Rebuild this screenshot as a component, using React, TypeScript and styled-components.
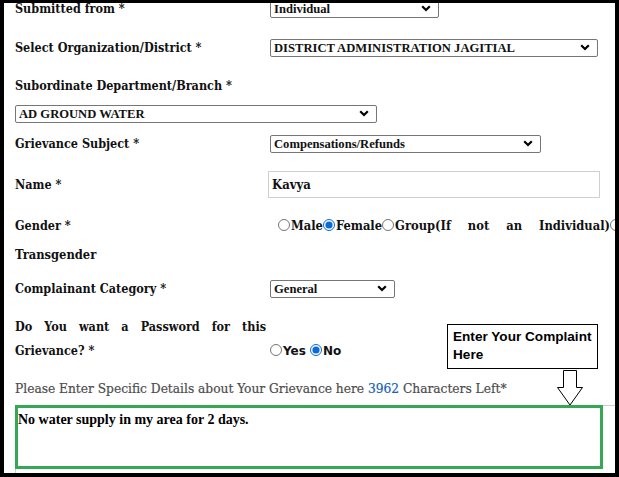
import React from "react";
import styled, { createGlobalStyle } from "styled-components";

const GlobalStyle = createGlobalStyle`
  html, body {
    margin: 0;
    padding: 0;
    background: #ffffff;
  }
  * {
    box-sizing: border-box;
  }
`;

const labelFont = `"DejaVu Serif Condensed", "DejaVu Serif", serif`;
const fieldFont = `"Liberation Serif", "Times New Roman", serif`;

const Frame = styled.div`
  position: relative;
  width: 619px;
  height: 477px;
  border-style: solid;
  border-color: #000;
  border-width: 3px 4px 4px 4px;
  overflow: hidden;
  background: #fff;
`;

const Form = styled.div`
  margin-top: -14px;
  padding-left: 11px;
`;

const Row = styled.div<{ h: number }>`
  display: flex;
  align-items: center;
  height: ${({ h }) => h}px;
`;

const Label = styled.div<{ w?: number }>`
  flex: none;
  width: ${({ w }) => w ?? 255}px;
  font-family: ${labelFont};
  font-weight: bold;
  font-size: 12.5px;
  color: #111;
  white-space: nowrap;
`;

const SelectWrap = styled.div<{ w: number }>`
  position: relative;
  width: ${({ w }) => w}px;
  height: 18px;
`;

const Select = styled.select`
  appearance: none;
  width: 100%;
  height: 100%;
  margin: 0;
  padding: 0 20px 0 3px;
  border: 1px solid #767676;
  border-radius: 2px;
  background: #fff;
  font-family: ${fieldFont};
  font-weight: bold;
  font-size: 12.6px;
  color: #111;
  outline: none;
`;

const Chevron = styled.svg`
  position: absolute;
  right: 8px;
  top: 6px;
  pointer-events: none;
`;

const TextInput = styled.input`
  width: 332px;
  height: 27px;
  margin: 0 0 0 -1px;
  padding: 0 3px;
  border: 1px solid #cfcfcf;
  font-family: ${labelFont};
  font-weight: bold;
  font-size: 13px;
  color: #111;
  outline: none;
`;

const GenderBlock = styled.div`
  padding-top: 7px;
  font-family: ${labelFont};
  font-weight: bold;
  font-size: 12.8px;
  color: #111;
  line-height: 29px;
`;

const GenderLine = styled.div`
  display: flex;
  align-items: center;
  height: 29px;
`;

const GenderOptions = styled.div`
  flex: none;
  width: 345px;
  margin-left: 8px;
  display: flex;
  justify-content: space-between;
  align-items: center;
`;

const Radio = styled.input.attrs({ type: "radio" })`
  width: 12px;
  height: 12px;
  margin: 0 1px 0 0;
  vertical-align: -1px;
  accent-color: #0a6ad8;
`;

const PasswordRow = styled.div`
  display: flex;
  align-items: flex-end;
  padding-top: 8px;
  height: 56px;
`;

const PasswordLabel = styled.div`
  width: 251px;
  margin-right: 4px;
  font-family: ${labelFont};
  font-weight: bold;
  font-size: 12.5px;
  line-height: 24px;
  color: #111;
  text-align: justify;
`;

const YesNo = styled.div`
  display: flex;
  align-items: center;
  height: 24px;
  gap: 4px;
  font-family: "DejaVu Sans", Verdana, sans-serif;
  font-weight: bold;
  font-size: 12px;
  color: #111;
`;

const Details = styled.div`
  margin-top: 13px;
  height: 24px;
  line-height: 24px;
  font-family: ${labelFont};
  font-size: 13.6px;
  color: #4d4d4d;
  white-space: nowrap;
  -webkit-text-stroke: 0.2px #4d4d4d;
`;

const Count = styled.span`
  color: #1a5fb4;
  -webkit-text-stroke: 0.2px #1a5fb4;
`;

const ComplaintBox = styled.textarea`
  display: block;
  margin-top: 5px;
  width: 640px;
  height: 100px;
  padding: 6px 2px;
  border: 1px solid #cccccc;
  resize: none;
  font-family: ${fieldFont};
  font-weight: bold;
  font-size: 14px;
  color: #000;
  outline: none;
`;

const GreenMark = styled.div`
  position: absolute;
  left: 11px;
  top: 402px;
  width: 588px;
  height: 64px;
  border: 3px solid #34a853;
  pointer-events: none;
`;

const Callout = styled.div`
  position: absolute;
  left: 443px;
  top: 321px;
  width: 151px;
  height: 45px;
  padding: 3px 5px;
  border: 1px solid #000;
  background: #fff;
  font-family: "Liberation Sans", Arial, sans-serif;
  font-weight: bold;
  font-size: 13.6px;
  line-height: 18px;
  color: #000;
  white-space: nowrap;
`;

const ArrowMark = styled.svg`
  position: absolute;
  left: 552px;
  top: 367px;
`;

function Dropdown({ w, value }: { w: number; value: string }) {
  return (
    <SelectWrap w={w}>
      <Select defaultValue={value}>
        <option>{value}</option>
      </Select>
      <Chevron width="10" height="7" viewBox="0 0 10 7">
        <path d="M1.2 1.2 L5 5 L8.8 1.2" fill="none" stroke="#000" strokeWidth="2.2" />
      </Chevron>
    </SelectWrap>
  );
}

export default function App() {
  return (
    <>
      <GlobalStyle />
      <Frame>
        <Form>
          <Row h={38}>
            <Label>Submitted from *</Label>
            <Dropdown w={169} value="Individual" />
          </Row>
          <Row h={40}>
            <Label>Select Organization/District *</Label>
            <Dropdown w={328} value="DISTRICT ADMINISTRATION JAGITIAL" />
          </Row>
          <Row h={37}>
            <Label>Subordinate Department/Branch *</Label>
          </Row>
          <Row h={17}>
            <Dropdown w={362} value="AD GROUND WATER" />
          </Row>
          <Row h={44}>
            <Label>Grievance Subject *</Label>
            <Dropdown w={271} value="Compensations/Refunds" />
          </Row>
          <Row h={39}>
            <Label w={254}>Name *</Label>
            <TextInput defaultValue="Kavya" />
          </Row>
          <GenderBlock>
            <GenderLine>
              <Label>Gender *</Label>
              <GenderOptions>
                <span>
                  <Radio name="gender" />Male<Radio name="gender" defaultChecked />Female
                  <Radio name="gender" />Group(If
                </span>
                <span>not</span>
                <span>an</span>
                <span>
                  Individual)<Radio name="gender" />
                </span>
              </GenderOptions>
            </GenderLine>
            <div>Transgender</div>
          </GenderBlock>
          <Row h={38}>
            <Label>Complainant Category *</Label>
            <Dropdown w={125} value="General" />
          </Row>
          <PasswordRow>
            <PasswordLabel>Do You want a Password for this Grievance? *</PasswordLabel>
            <YesNo>
              <span>
                <Radio name="pwd" />Yes
              </span>
              <span>
                <Radio name="pwd" defaultChecked />No
              </span>
            </YesNo>
          </PasswordRow>
          <Details>
            Please Enter Specific Details about Your Grievance here <Count>3962</Count> Characters Left*
          </Details>
          <ComplaintBox defaultValue="No water supply in my area for 2 days." />
        </Form>
        <GreenMark />
        <Callout>
          Enter Your Complaint
          <br />
          Here
        </Callout>
        <ArrowMark width="28" height="37" viewBox="0 0 28 37">
          <path
            d="M7.5 0.5 H20.5 V17.5 H26.5 L14 35 L1.5 17.5 H7.5 Z"
            fill="#fff"
            stroke="#000"
            strokeWidth="1"
          />
        </ArrowMark>
      </Frame>
    </>
  );
}
